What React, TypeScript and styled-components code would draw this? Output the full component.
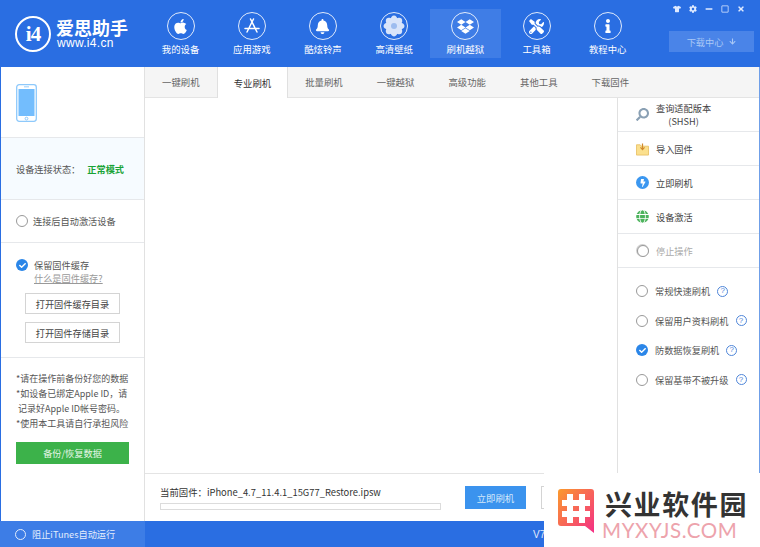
import React from 'react';
import styled, { createGlobalStyle } from 'styled-components';
import { FaApple, FaBell, FaDropbox, FaTools, FaInfo, FaTshirt, FaCog, FaTimes, FaMinus, FaRegSquare, FaCheck, FaBolt, FaGlobe, FaArrowDown, FaSearch } from 'react-icons/fa';

const GlobalStyle = createGlobalStyle`
  html, body { margin: 0; padding: 0; background: #fff; }
  * { box-sizing: border-box; }
  body { font-family: "Noto Sans CJK SC", "Liberation Sans", sans-serif; }
`;

const Window = styled.div`
  width: 760px;
  height: 547px;
  position: relative;
  overflow: hidden;
  display: flex;
  flex-direction: column;
  background: #fff;
  color: #555;
  font-size: 9.2px;
`;

const Header = styled.header`
  height: 67px;
  flex: none;
  display: flex;
  background: #2a6ee2;
  color: #fff;
`;

const Brand = styled.div`
  width: 145px;
  flex: none;
  display: flex;
  align-items: flex-start;
  gap: 5px;
  padding: 16px 0 0 15px;
`;

const BrandMark = styled.div`
  width: 36px;
  height: 36px;
  border: 2px solid #fff;
  border-radius: 50%;
  display: flex;
  align-items: center;
  justify-content: center;
  font: bold 21px/1 "Liberation Serif", serif;
  letter-spacing: -1px;
`;

const BrandText = styled.div`
  display: flex;
  flex-direction: column;
  padding-top: 1px;
`;

const BrandName = styled.div`
  font-size: 18px;
  line-height: 20px;
  font-weight: 700;
  white-space: nowrap;
`;

const BrandUrl = styled.div`
  font: 12px/13px "Liberation Sans", sans-serif;
  letter-spacing: 0.3px;
  margin-left: 1px;
`;

const Nav = styled.nav`
  display: flex;
  align-items: flex-start;
  padding-top: 9px;
`;

const NavItem = styled.div<{ $active?: boolean }>`
  width: 71.2px;
  height: 49px;
  padding-top: 3px;
  display: flex;
  flex-direction: column;
  align-items: center;
  gap: 2px;
  background: ${(p) => (p.$active ? '#3f7de6' : 'transparent')};
`;

const NavCircle = styled.div`
  width: 28px;
  height: 28px;
  border: 1px solid rgba(255, 255, 255, 0.85);
  border-radius: 50%;
  display: flex;
  align-items: center;
  justify-content: center;
  font-size: 15px;
`;

const NavLabel = styled.span`
  font-size: 9.4px;
  line-height: 15px;
  white-space: nowrap;
`;

const HeaderRight = styled.div`
  flex: 1;
  display: flex;
  flex-direction: column;
  align-items: flex-end;
  padding: 4px 6px 0 0;
`;

const WindowControls = styled.div`
  display: flex;
  align-items: center;
  gap: 8px;
  height: 10px;
  margin-top: 0;
  padding-right: 9px;
  font-size: 8px;
  color: #dfeaff;
`;

const DownloadCenter = styled.div`
  width: 85px;
  height: 21px;
  margin-top: 17px;
  background: #4a84e8;
  color: #a9c8f6;
  display: flex;
  align-items: center;
  justify-content: center;
  gap: 6px;
  font-size: 9.2px;
`;

const Body = styled.div`
  flex: 1;
  display: flex;
  min-height: 0;
  border-left: 1px solid #2a6ee2;
  border-right: 1px solid #6f9fe8;
`;

const Sidebar = styled.aside`
  width: 144px;
  flex: none;
  border-right: 1px solid #e1e1e1;
  display: flex;
  flex-direction: column;
`;

const PhoneBlock = styled.div`
  height: 71px;
  padding: 17px 0 0 15px;
  border-bottom: 1px solid #e6e8eb;
`;

const StatusBlock = styled.div`
  height: 62px;
  display: flex;
  align-items: center;
  padding: 0 15px;
  gap: 7px;
  background: #f6fbff;
  border-bottom: 1px solid #e6e8eb;
  white-space: nowrap;
`;

const StatusValue = styled.b`
  color: #19a336;
`;

const AutoBlock = styled.div`
  height: 43px;
  display: flex;
  align-items: center;
  gap: 5px;
  padding-left: 15px;
  border-bottom: 1px solid #e6e8eb;
`;

const CacheBlock = styled.div`
  height: 115px;
  padding: 16px 0 0 15px;
  border-bottom: 1px solid #e6e8eb;
`;

const CacheHead = styled.div`
  display: flex;
  gap: 6px;
`;

const CacheText = styled.div`
  line-height: 13px;
`;

const HelpLink = styled.div`
  color: #999;
  text-decoration: underline;
`;

const OutlineButton = styled.div`
  width: 95px;
  height: 21px;
  margin: 8px 0 0 9px;
  border: 1px solid #d4d4d4;
  display: flex;
  align-items: center;
  justify-content: center;
  color: #444;
  white-space: nowrap;
`;

const NotesBlock = styled.div`
  flex: 1;
  padding: 13px 0 0 15px;
`;

const Note = styled.div`
  line-height: 15px;
  white-space: pre;
  font-size: 9px;
`;

const GreenButton = styled.div`
  width: 113px;
  height: 22px;
  margin-top: 11px;
  background: #3cb24a;
  color: #e6f6e8;
  display: flex;
  align-items: center;
  justify-content: center;
`;

const Center = styled.main`
  flex: 1;
  min-width: 0;
  display: flex;
  flex-direction: column;
`;

const Tabs = styled.div`
  height: 31px;
  flex: none;
  display: flex;
  background: #f5f5f5;
  border-bottom: 1px solid #e4e4e4;
`;

const Tab = styled.div<{ $active?: boolean }>`
  width: 71.6px;
  height: ${(p) => (p.$active ? '31px' : '30px')};
  display: flex;
  align-items: center;
  justify-content: center;
  font-size: 9.4px;
  white-space: nowrap;
  background: ${(p) => (p.$active ? '#fff' : 'transparent')};
  color: ${(p) => (p.$active ? '#333' : '#666')};
  border-left: 1px solid ${(p) => (p.$active ? '#e0e0e0' : 'transparent')};
  border-right: 1px solid ${(p) => (p.$active ? '#e0e0e0' : 'transparent')};
`;

const Workspace = styled.div`
  flex: 1;
  min-height: 0;
  display: flex;
  justify-content: flex-end;
  border-bottom: 1px solid #e4e4e4;
`;

const ActionPanel = styled.div`
  width: 142px;
  border-left: 1px solid #e1e1e1;
`;

const ActionRow = styled.div<{ $muted?: boolean }>`
  height: 34px;
  display: flex;
  align-items: center;
  gap: 7px;
  padding-left: 18px;
  border-bottom: 1px solid #e6e8eb;
  color: ${(p) => (p.$muted ? '#aaa' : '#444')};
  white-space: nowrap;
`;

const ActionIcon = styled.span<{ $color: string }>`
  width: 13px;
  height: 13px;
  flex: none;
  border-radius: 50%;
  background: ${(p) => p.$color};
  color: #fff;
  display: flex;
  align-items: center;
  justify-content: center;
  font-size: 8px;
`;

const PlainIcon = styled.span`
  width: 13px;
  height: 14px;
  flex: none;
  display: flex;
`;

const ShshLabel = styled.div`
  text-align: center;
  line-height: 13px;
`;

const OptionList = styled.div`
  padding-top: 15px;
  display: flex;
  flex-direction: column;
  gap: 13.6px;
`;

const OptionRow = styled.div`
  height: 16px;
  display: flex;
  align-items: center;
  gap: 7px;
  padding-left: 18px;
  white-space: nowrap;
`;

const HelpBadge = styled.span`
  width: 11px;
  height: 11px;
  border: 1px solid #4f86d9;
  border-radius: 50%;
  color: #4f86d9;
  display: flex;
  align-items: center;
  justify-content: center;
  font: 8px/1 "Liberation Sans", sans-serif;
`;

const Radio = styled.span<{ $on?: boolean }>`
  width: 12px;
  height: 12px;
  flex: none;
  border-radius: 50%;
  border: ${(p) => (p.$on ? 'none' : '1px solid #999')};
  background: ${(p) => (p.$on ? '#2b86e8' : '#fff')};
  color: #fff;
  display: flex;
  align-items: center;
  justify-content: center;
  font-size: 7px;
`;

const FirmwareBar = styled.div`
  height: 47px;
  flex: none;
  display: flex;
  align-items: center;
  padding-left: 15px;
  gap: 24px;
`;

const FirmwareInfo = styled.div`
  width: 281px;
  display: flex;
  flex-direction: column;
  gap: 4px;
`;

const FirmwareName = styled.div`
  font-size: 9.4px;
  line-height: 14px;
  color: #333;
  white-space: nowrap;
`;

const Progress = styled.div`
  height: 7px;
  border: 1px solid #dcdcdc;
`;

const BlueButton = styled.div`
  width: 61px;
  height: 23px;
  background: #3b93ee;
  color: #d5e8fb;
  display: flex;
  align-items: center;
  justify-content: center;
  font-size: 9.4px;
`;

const GhostButton = styled.div`
  width: 61px;
  height: 23px;
  margin-left: -9px;
  border: 1px solid #d4d4d4;
`;

const Footer = styled.footer`
  height: 26px;
  flex: none;
  display: flex;
  align-items: center;
  justify-content: space-between;
  background: #2a6ee2;
  color: #e3edfc;
`;

const FooterLeft = styled.div`
  width: 145px;
  height: 100%;
  display: flex;
  align-items: center;
  gap: 6px;
  padding-left: 15px;
  background: #3d7de6;
  white-space: nowrap;
`;

const FooterRing = styled.span`
  width: 11px;
  height: 11px;
  border: 1px solid #e3edfc;
  border-radius: 50%;
`;

const Version = styled.div`
  margin: 0 auto 0 388px;
  font: 10px "Liberation Sans", sans-serif;
`;

const Watermark = styled.div`
  position: absolute;
  left: 544px;
  top: 473px;
  width: 216px;
  height: 74px;
  background: #fff;
  display: flex;
  align-items: flex-start;
  padding: 16px 0 0 14px;
  gap: 8px;
`;

const WatermarkText = styled.div`
  display: flex;
  flex-direction: column;
`;

const WatermarkName = styled.div`
  font-size: 27px;
  line-height: 30px;
  font-weight: 700;
  color: #333;
  letter-spacing: 1.6px;
  margin-left: 3px;
  white-space: nowrap;
`;

const WatermarkUrl = styled.div`
  font: 20.5px/22px "Lato", sans-serif;
  color: #eda3ac;
  letter-spacing: 0.6px;
  white-space: nowrap;
`;

const AppStoreGlyph = () => (
  <svg width="18" height="18" viewBox="0 0 18 18" fill="none" stroke="#fff" strokeWidth="1.5" strokeLinecap="round">
    <path d="M10.5 2 4 15M7.5 2 14 15M2 11.5h14" />
  </svg>
);

const FlowerGlyph = () => (
  <svg width="22" height="22" viewBox="0 0 22 22">
    {[0, 45, 90, 135, 180, 225, 270, 315].map((a) => (
      <ellipse key={a} cx="11" cy="5.5" rx="3.6" ry="5" fill="#d8e4fa" transform={`rotate(${a} 11 11)`} />
    ))}
    <circle cx="11" cy="11" r="3" fill="#9dbcef" />
  </svg>
);

const PhoneGlyph = () => (
  <svg width="21" height="38" viewBox="0 0 21 38">
    <rect x="0.7" y="0.7" width="19.6" height="36.6" rx="2.5" fill="#fff" stroke="#8ec9fb" strokeWidth="1.3" />
    <rect x="2.5" y="5" width="16" height="27" fill="#73bdfd" />
    <rect x="8" y="2.4" width="5" height="0.9" fill="#8ec9fb" />
    <circle cx="10.5" cy="34.6" r="1.4" fill="none" stroke="#8ec9fb" />
  </svg>
);

const FolderGlyph = () => (
  <svg width="14" height="14" viewBox="0 0 14 14">
    <path d="M0.5 2.5h4l1.2 1.5h7.8v9.5h-13z" fill="#fbe08e" stroke="#e9c36a" />
    <path d="M7 1v6M4.8 5.2 7 7.6l2.2-2.4" fill="none" stroke="#d08a2c" strokeWidth="1.3" />
  </svg>
);

const LogoGlyph = () => (
  <svg width="36" height="44" viewBox="0 0 36 44">
    <defs>
      <linearGradient id="wm" x1="0" y1="0" x2="1" y2="1">
        <stop offset="0" stopColor="#fb9a2c" />
        <stop offset="1" stopColor="#f42f86" />
      </linearGradient>
    </defs>
    <path d="M3 0h30a3 3 0 0 1 3 3v41l-9-7H3a3 3 0 0 1-3-3V3a3 3 0 0 1 3-3z" fill="url(#wm)" />
    <path d="M9 5h6v6h6V5h6v6h5v6h-5v5h5v6h-5v6h-6v-6h-6v6H9v-6H4v-6h5v-5H4v-6h5zm6 12v5h6v-5z" fill="#fff" fillRule="evenodd" />
  </svg>
);

const navItems: { label: string; icon: React.ReactNode; active?: boolean }[] = [
  { label: '我的设备', icon: <FaApple size={17} /> },
  { label: '应用游戏', icon: <AppStoreGlyph /> },
  { label: '酷炫铃声', icon: <FaBell size={15} /> },
  { label: '高清壁纸', icon: <FlowerGlyph /> },
  { label: '刷机越狱', icon: <FaDropbox size={17} />, active: true },
  { label: '工具箱', icon: <FaTools size={15} /> },
  { label: '教程中心', icon: <FaInfo size={14} /> },
];

const tabs = ['一键刷机', '专业刷机', '批量刷机', '一键越狱', '高级功能', '其他工具', '下载固件'];

const options = [
  { label: '常规快速刷机' },
  { label: '保留用户资料刷机' },
  { label: '防数据恢复刷机', on: true },
  { label: '保留基带不被升级' },
];

export default function App() {
  return (
    <Window>
      <GlobalStyle />
      <Header>
        <Brand>
          <BrandMark>i4</BrandMark>
          <BrandText>
            <BrandName>爱思助手</BrandName>
            <BrandUrl>www.i4.cn</BrandUrl>
          </BrandText>
        </Brand>
        <Nav>
          {navItems.map((item) => (
            <NavItem key={item.label} $active={item.active}>
              <NavCircle>{item.icon}</NavCircle>
              <NavLabel>{item.label}</NavLabel>
            </NavItem>
          ))}
        </Nav>
        <HeaderRight>
          <WindowControls>
            <FaTshirt />
            <FaCog />
            <FaMinus />
            <FaRegSquare />
            <FaTimes />
          </WindowControls>
          <DownloadCenter>
            下载中心
            <FaArrowDown size={7} />
          </DownloadCenter>
        </HeaderRight>
      </Header>

      <Body>
        <Sidebar>
          <PhoneBlock>
            <PhoneGlyph />
          </PhoneBlock>
          <StatusBlock>
            设备连接状态：
            <StatusValue>正常模式</StatusValue>
          </StatusBlock>
          <AutoBlock>
            <Radio />
            连接后自动激活设备
          </AutoBlock>
          <CacheBlock>
            <CacheHead>
              <Radio $on>
                <FaCheck />
              </Radio>
              <CacheText>
                保留固件缓存
                <HelpLink>什么是固件缓存?</HelpLink>
              </CacheText>
            </CacheHead>
            <OutlineButton>打开固件缓存目录</OutlineButton>
            <OutlineButton>打开固件存储目录</OutlineButton>
          </CacheBlock>
          <NotesBlock>
            <Note>*请在操作前备份好您的数据</Note>
            <Note>*如设备已绑定Apple ID，请</Note>
            <Note> 记录好Apple ID帐号密码。</Note>
            <Note>*使用本工具请自行承担风险</Note>
            <GreenButton>备份/恢复数据</GreenButton>
          </NotesBlock>
        </Sidebar>

        <Center>
          <Tabs>
            {tabs.map((tab, i) => (
              <Tab key={tab} $active={i === 1}>
                {tab}
              </Tab>
            ))}
          </Tabs>
          <Workspace>
            <ActionPanel>
              <ActionRow>
                <PlainIcon>
                  <FaSearch size={13} color="#8aa0b4" style={{ transform: 'scaleX(-1)' }} />
                </PlainIcon>
                <ShshLabel>
                  查询适配版本
                  <br />
                  (SHSH)
                </ShshLabel>
              </ActionRow>
              <ActionRow>
                <PlainIcon>
                  <FolderGlyph />
                </PlainIcon>
                导入固件
              </ActionRow>
              <ActionRow>
                <ActionIcon $color="#3b97f0">
                  <FaBolt />
                </ActionIcon>
                立即刷机
              </ActionRow>
              <ActionRow>
                <ActionIcon $color="#fff">
                  <FaGlobe size={13} color="#4cb35c" />
                </ActionIcon>
                设备激活
              </ActionRow>
              <ActionRow $muted>
                <ActionIcon $color="#cfcfcf">
                  <Radio />
                </ActionIcon>
                停止操作
              </ActionRow>
              <OptionList>
                {options.map((opt) => (
                  <OptionRow key={opt.label}>
                    <Radio $on={opt.on}>{opt.on && <FaCheck />}</Radio>
                    {opt.label}
                    <HelpBadge>?</HelpBadge>
                  </OptionRow>
                ))}
              </OptionList>
            </ActionPanel>
          </Workspace>
          <FirmwareBar>
            <FirmwareInfo>
              <FirmwareName>当前固件：iPhone_4.7_11.4.1_15G77_Restore.ipsw</FirmwareName>
              <Progress />
            </FirmwareInfo>
            <BlueButton>立即刷机</BlueButton>
            <GhostButton />
          </FirmwareBar>
        </Center>
      </Body>

      <Footer>
        <FooterLeft>
          <FooterRing />
          阻止iTunes自动运行
        </FooterLeft>
        <Version>V7</Version>
      </Footer>

      <Watermark>
        <LogoGlyph />
        <WatermarkText>
          <WatermarkName>兴业软件园</WatermarkName>
          <WatermarkUrl>MYXYJS.COM</WatermarkUrl>
        </WatermarkText>
      </Watermark>
    </Window>
  );
}
